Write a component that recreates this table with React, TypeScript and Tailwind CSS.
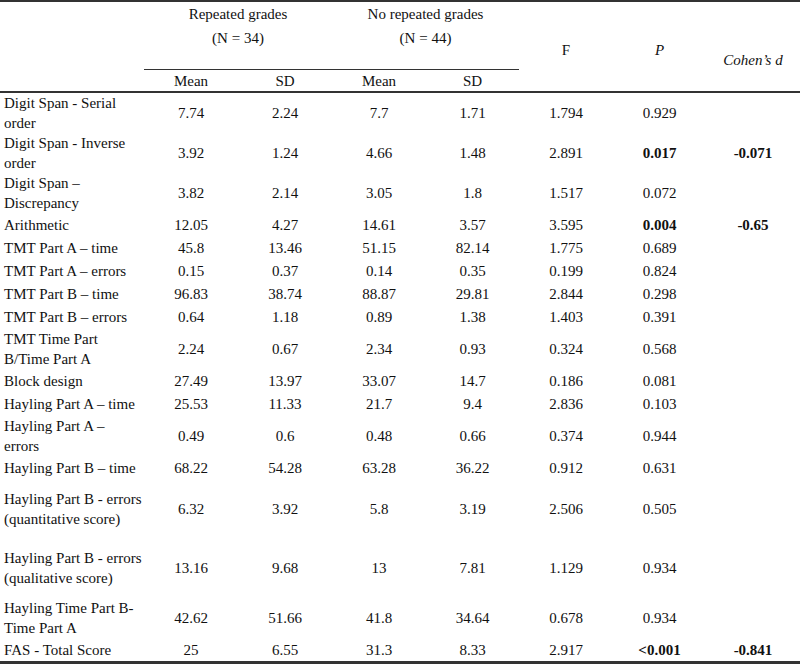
import React from "react";

type Row = { label: string[]; v: (string | { b: string })[]; h: string };

const rows: Row[] = [
  { label: ["Digit Span - Serial", "order"], v: ["7.74", "2.24", "7.7", "1.71", "1.794", "0.929", ""], h: "h-[40px]" },
  { label: ["Digit Span - Inverse", "order"], v: ["3.92", "1.24", "4.66", "1.48", "2.891", { b: "0.017" }, { b: "-0.071" }], h: "h-[40px]" },
  { label: ["Digit Span \u2013", "Discrepancy"], v: ["3.82", "2.14", "3.05", "1.8", "1.517", "0.072", ""], h: "h-[40px]" },
  { label: ["Arithmetic"], v: ["12.05", "4.27", "14.61", "3.57", "3.595", { b: "0.004" }, { b: "-0.65" }], h: "h-[23px]" },
  { label: ["TMT Part A \u2013 time"], v: ["45.8", "13.46", "51.15", "82.14", "1.775", "0.689", ""], h: "h-[23px]" },
  { label: ["TMT Part A \u2013 errors"], v: ["0.15", "0.37", "0.14", "0.35", "0.199", "0.824", ""], h: "h-[23px]" },
  { label: ["TMT Part B \u2013 time"], v: ["96.83", "38.74", "88.87", "29.81", "2.844", "0.298", ""], h: "h-[23px]" },
  { label: ["TMT Part B \u2013 errors"], v: ["0.64", "1.18", "0.89", "1.38", "1.403", "0.391", ""], h: "h-[23px]" },
  { label: ["TMT Time Part", "B/Time Part A"], v: ["2.24", "0.67", "2.34", "0.93", "0.324", "0.568", ""], h: "h-[41px]" },
  { label: ["Block design"], v: ["27.49", "13.97", "33.07", "14.7", "0.186", "0.081", ""], h: "h-[23px]" },
  { label: ["Hayling Part A \u2013 time"], v: ["25.53", "11.33", "21.7", "9.4", "2.836", "0.103", ""], h: "h-[23px]" },
  { label: ["Hayling Part A \u2013", "errors"], v: ["0.49", "0.6", "0.48", "0.66", "0.374", "0.944", ""], h: "h-[41px]" },
  { label: ["Hayling Part B \u2013 time"], v: ["68.22", "54.28", "63.28", "36.22", "0.912", "0.631", ""], h: "h-[23px]" },
  { label: ["Hayling Part B - errors", "(quantitative score)"], v: ["6.32", "3.92", "5.8", "3.19", "2.506", "0.505", ""], h: "h-[60px]" },
  { label: ["Hayling Part B - errors", "(qualitative score)"], v: ["13.16", "9.68", "13", "7.81", "1.129", "0.934", ""], h: "h-[58px]" },
  { label: ["Hayling Time Part B-", "Time Part A"], v: ["42.62", "51.66", "41.8", "34.64", "0.678", "0.934", ""], h: "h-[42px]" },
  { label: ["FAS - Total Score"], v: ["25", "6.55", "31.3", "8.33", "2.917", { b: "<0.001" }, { b: "-0.841" }], h: "h-[22px]" },
];

const cols = "grid grid-cols-[144px_94px_94px_94px_93px_94px_93px_94px]";

export default function App() {
  return (
    <div
      className="w-[800px] h-[667px] bg-white text-[#111] text-[15px] leading-[20px]"
      style={{ fontFamily: '"Liberation Serif", "Times New Roman", serif' }}
    >
      <div className="border-t-2 border-b-2 border-[#333]">
        <div className={`${cols} grid-rows-[68px_21px]`}>
          <div className="row-span-2" />
          <div className="col-span-2 border-b border-[#333] text-center leading-[24px]">
            <div>Repeated grades</div>
            <div>(N = 34)</div>
          </div>
          <div className="col-span-2 border-b border-[#333] text-center leading-[24px]">
            <div>No repeated grades</div>
            <div>(N = 44)</div>
          </div>
          <div className="row-span-2 text-center pt-[38px]">F</div>
          <div className="row-span-2 text-center pt-[38px] italic">P</div>
          <div className="row-span-2 text-center pt-[48px] italic">Cohen’s d</div>
          <div className="flex items-center justify-center">Mean</div>
          <div className="flex items-center justify-center">SD</div>
          <div className="flex items-center justify-center">Mean</div>
          <div className="flex items-center justify-center">SD</div>
        </div>
      </div>
      <div className="border-b-[3px] border-[#333]">
        {rows.map((r, i) => (
          <div key={i} className={`${cols} ${r.h}`}>
            <div className="flex flex-col justify-center pl-1 whitespace-nowrap">
              {r.label.map((l, j) => (
                <div key={j}>{l}</div>
              ))}
            </div>
            {r.v.map((v, j) =>
              typeof v === "string" ? (
                <div key={j} className="flex items-center justify-center">
                  {v}
                </div>
              ) : (
                <div key={j} className="flex items-center justify-center font-bold">
                  {v.b}
                </div>
              )
            )}
          </div>
        ))}
      </div>
    </div>
  );
}
